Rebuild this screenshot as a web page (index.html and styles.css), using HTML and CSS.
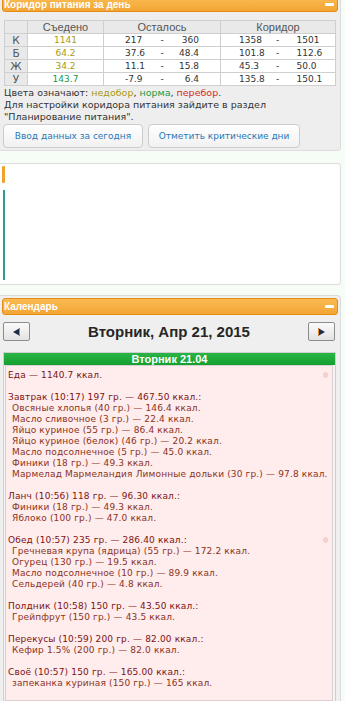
FILE: index.html
```html
<!DOCTYPE html>
<html lang="ru">
<head>
    <meta charset="UTF-8">
    <meta name="viewport" content="width=device-width, initial-scale=1.0">
    <title>Дневник питания</title>
    <link rel="stylesheet" href="styles.css">
</head>
<body>

<!-- Коридор питания -->
<div class="panel panel-corridor">
    <div class="panel-head">Коридор питания за день<span class="minus"></span></div>
    <div class="corridor-body">
        <table class="corridor">
            <colgroup>
                <col style="width:23px">
                <col style="width:76px">
                <col style="width:52px">
                <col style="width:13px">
                <col style="width:52px">
                <col style="width:50px">
                <col style="width:14px">
                <col style="width:51px">
            </colgroup>
            <tr class="head-row">
                <th></th>
                <th>Съедено</th>
                <th colspan="3">Осталось</th>
                <th colspan="3">Коридор</th>
            </tr>
            <tr>
                <th>К</th>
                <td class="eaten low">1141</td>
                <td class="lo">217</td><td class="dash">-</td><td class="hi">360</td>
                <td class="lo cor">1358</td><td class="dash">-</td><td class="hi cor">1501</td>
            </tr>
            <tr>
                <th>Б</th>
                <td class="eaten low">64.2</td>
                <td class="lo">37.6</td><td class="dash">-</td><td class="hi">48.4</td>
                <td class="lo cor">101.8</td><td class="dash">-</td><td class="hi cor">112.6</td>
            </tr>
            <tr>
                <th>Ж</th>
                <td class="eaten low">34.2</td>
                <td class="lo">11.1</td><td class="dash">-</td><td class="hi">15.8</td>
                <td class="lo cor">45.3</td><td class="dash">-</td><td class="hi cor">50.0</td>
            </tr>
            <tr>
                <th>У</th>
                <td class="eaten ok">143.7</td>
                <td class="lo">-7.9</td><td class="dash">-</td><td class="hi">6.4</td>
                <td class="lo cor">135.8</td><td class="dash">-</td><td class="hi cor">150.1</td>
            </tr>
        </table>

        <p class="note">Цвета означают: <span class="low">недобор</span>, <span class="ok">норма</span>, <span class="over">перебор</span>.</p>
        <p class="note">Для настройки коридора питания зайдите в раздел<br>"Планирование питания".</p>

        <div class="actions">
            <button class="btn btn-today">Ввод данных за сегодня</button>
            <button class="btn btn-days">Отметить критические дни</button>
        </div>
    </div>
</div>

<!-- свернутый блок -->
<div class="panel panel-empty">
    <div class="side">
        <span class="side-orange"></span>
        <span class="side-teal"></span>
    </div>
</div>

<!-- Календарь -->
<div class="panel panel-calendar">
    <div class="panel-head">Календарь<span class="minus"></span></div>

    <div class="cal-nav">
        <button class="nav-btn">
            <svg width="7" height="8" viewBox="0 0 7 8"><polygon points="7,0 7,8 0,4" fill="#1d2a48"/><line x1="6.5" y1="0.5" x2="6.5" y2="7.5" stroke="#e08a20" stroke-width="1"/></svg>
        </button>
        <div class="cal-title">Вторник, Апр 21, 2015</div>
        <button class="nav-btn">
            <svg width="7" height="8" viewBox="0 0 7 8"><polygon points="0,0 0,8 7,4" fill="#1d2a48"/><line x1="0.5" y1="0.5" x2="0.5" y2="7.5" stroke="#e08a20" stroke-width="1"/></svg>
        </button>
    </div>

    <div class="day">
        <div class="day-title">Вторник 21.04</div>
        <div class="day-log">
            <span class="blot blot-top"></span>
            <span class="blot blot-mid"></span>
            <div class="meal">
                <div class="meal-head">Еда — 1140.7 ккал.</div>
            </div>
            <div class="meal">
                <div class="meal-head">Завтрак (10:17) 197 гр. — 467.50 ккал.:</div>
                <div class="item">Овсяные хлопья (40 гр.) — 146.4 ккал.</div>
                <div class="item">Масло сливочное (3 гр.) — 22.4 ккал.</div>
                <div class="item">Яйцо куриное (55 гр.) — 86.4 ккал.</div>
                <div class="item">Яйцо куриное (белок) (46 гр.) — 20.2 ккал.</div>
                <div class="item">Масло подсолнечное (5 гр.) — 45.0 ккал.</div>
                <div class="item">Финики (18 гр.) — 49.3 ккал.</div>
                <div class="item">Мармелад Мармеландия Лимонные дольки (30 гр.) — 97.8 ккал.</div>
            </div>
            <div class="meal">
                <div class="meal-head">Ланч (10:56) 118 гр. — 96.30 ккал.:</div>
                <div class="item">Финики (18 гр.) — 49.3 ккал.</div>
                <div class="item">Яблоко (100 гр.) — 47.0 ккал.</div>
            </div>
            <div class="meal">
                <div class="meal-head">Обед (10:57) 235 гр. — 286.40 ккал.:</div>
                <div class="item">Гречневая крупа (ядрица) (55 гр.) — 172.2 ккал.</div>
                <div class="item">Огурец (130 гр.) — 19.5 ккал.</div>
                <div class="item">Масло подсолнечное (10 гр.) — 89.9 ккал.</div>
                <div class="item">Сельдерей (40 гр.) — 4.8 ккал.</div>
            </div>
            <div class="meal">
                <div class="meal-head">Полдник (10:58) 150 гр. — 43.50 ккал.:</div>
                <div class="item">Грейпфрут (150 гр.) — 43.5 ккал.</div>
            </div>
            <div class="meal">
                <div class="meal-head">Перекусы (10:59) 200 гр. — 82.00 ккал.:</div>
                <div class="item">Кефир 1.5% (200 гр.) — 82.0 ккал.</div>
            </div>
            <div class="meal">
                <div class="meal-head">Своё (10:57) 150 гр. — 165.00 ккал.:</div>
                <div class="item">запеканка куриная (150 гр.) — 165 ккал.</div>
            </div>
        </div>
    </div>
</div>

</body>
</html>
```

FILE: styles.css
```css
body {
    margin: 0;
    padding: 0;
    background-color: #f6fcf6;
    font-family: "DejaVu Sans", Verdana, sans-serif;
    font-size: 9.5px;
    color: #333;
    overflow: hidden;
}

/* panels */
.panel {
    box-sizing: border-box;
    width: 341px;
    border: 1px solid #dcdcdc;
    border-radius: 0 4px 4px 0;
    border-left: none;
}

.panel-head {
    box-sizing: border-box;
    display: flex;
    align-items: center;
    justify-content: space-between;
    padding: 0 3px 0 1px;
    background: linear-gradient(#f9bb52, #f3a535);
    border: 1px solid #e48d10;
    border-radius: 3px;
    color: #fff;
    font-family: "Liberation Sans", Arial, sans-serif;
    font-weight: bold;
    font-size: 10px;
}

.minus {
    width: 9px;
    height: 3px;
    border-radius: 1px;
    background: #fff;
}

/* corridor */
.panel-corridor {
    margin-top: -7px;
    padding: 2px 1px 2px 2px;
    background: #eeeeee;
}

.panel-corridor .panel-head {
    height: 16px;
    width: 336px;
}

.corridor-body {
    padding: 8px 0 0 2px;
}

.corridor {
    width: 331px;
    table-layout: fixed;
    border-collapse: collapse;
    background: #fff;
}

.corridor th,
.corridor td {
    height: 12px;
    padding: 0;
    line-height: 12px;
    border-top: 1px solid #cfcfcf;
    border-bottom: 1px solid #cfcfcf;
    font-size: 9px;
    font-weight: normal;
    white-space: nowrap;
}

.corridor th {
    background: #e9e9e9;
    color: #555;
    text-align: center;
    border: 1px solid #cfcfcf;
    font-size: 10.5px;
}

.head-row th {
    font-family: "Liberation Sans", Arial, sans-serif;
    font-size: 11px;
}

.eaten {
    text-align: center;
    border-right: 1px solid #cfcfcf;
}

.lo {
    padding-left: 21px !important;
    text-align: left;
}

.lo.cor {
    padding-left: 18px !important;
    border-left: 1px solid #cfcfcf;
}

.dash {
    text-align: center;
}

.hi {
    text-align: right;
    padding-right: 21px !important;
}

.hi.cor {
    text-align: left;
    padding-left: 12px !important;
    padding-right: 0 !important;
    border-right: 1px solid #cfcfcf;
}

.low {
    color: #a99a12;
}

.ok {
    color: #229a45;
}

.over {
    color: #d42a22;
}

.note {
    margin: 0;
    line-height: 12px;
}

.corridor + .note {
    margin-top: 1px;
}

.actions {
    display: flex;
    gap: 5px;
    margin-top: 1px;
    margin-left: -1px;
}

.btn {
    height: 24px;
    padding: 0 4px;
    border: 1px solid #cccccc;
    border-radius: 4px;
    background: linear-gradient(#ffffff, #f1f1f1);
    color: #2b77b6;
    font-family: "DejaVu Sans", Verdana, sans-serif;
    font-size: 9px;
    white-space: nowrap;
}

.btn-today {
    width: 140px;
}

.btn-days {
    width: 152px;
}

/* empty panel */
.panel-empty {
    margin-top: 12px;
    height: 122px;
    background: #fff;
    padding: 2px 0 0 2px;
}

.side {
    display: flex;
    flex-direction: column;
    align-items: flex-start;
    gap: 7px;
}

.side-orange {
    width: 3px;
    height: 17px;
    border-radius: 1px;
    background: #f1a02a;
}

.side-teal {
    width: 2px;
    height: 90px;
    margin-left: 1px;
    background: #2f9d97;
}

/* calendar */
.panel-calendar {
    margin-top: 10px;
    height: 420px;
    padding: 2px 2px 0 2px;
    background: #efefef;
}

.panel-calendar .panel-head {
    height: 17px;
    width: 336px;
}

.cal-nav {
    display: flex;
    align-items: center;
    justify-content: space-between;
    margin: 7px 3px 0 1px;
}

.nav-btn {
    display: flex;
    align-items: center;
    justify-content: center;
    width: 27px;
    height: 19px;
    padding: 0;
    border: 1px solid #8c8c8c;
    border-radius: 2px;
    background: linear-gradient(#fbfbfb, #e2e2e2);
}

.cal-title {
    font-family: "Liberation Sans", Arial, sans-serif;
    font-weight: bold;
    font-size: 15px;
    color: #262626;
}

.day {
    margin: 11px 2px 0 1px;
    border: 1px solid #cfcfcf;
    background: #f4f4f4;
}

.day-title {
    height: 12px;
    line-height: 12px;
    background: linear-gradient(#2ab446, #14a02e);
    color: #fff;
    text-align: center;
    font-family: "Liberation Sans", Arial, sans-serif;
    font-weight: bold;
    font-size: 11px;
}

.day-log {
    position: relative;
    margin: 0 2px 2px 1px;
    padding: 4px 2px 11px 2px;
    border: 1px solid #dccfcf;
    background: #ffecec;
    font-size: 9px;
    letter-spacing: 0.15px;
    line-height: 11px;
    white-space: nowrap;
}

.blot {
    position: absolute;
    right: 4px;
    width: 5px;
    height: 6px;
    border-radius: 50%;
    background: #f6cfcf;
}

.blot-top {
    top: 6px;
}

.blot-mid {
    top: 171px;
}

.meal {
    margin-bottom: 11px;
}

.meal:last-child {
    margin-bottom: 0;
}

.meal-head {
    color: #7c1414;
}

.item {
    padding-left: 4px;
    color: #8a3424;
}
```
